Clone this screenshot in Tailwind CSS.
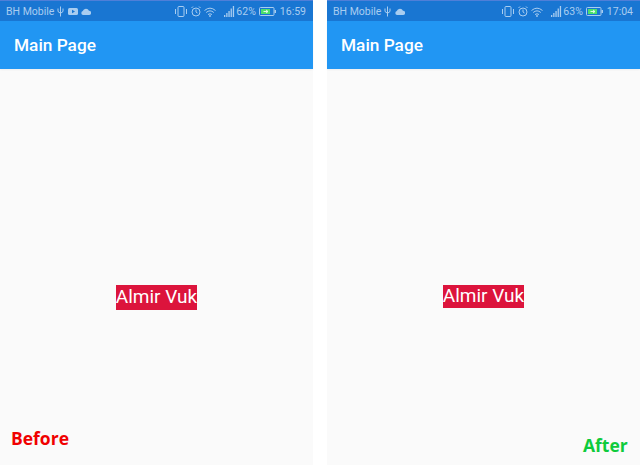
<!DOCTYPE html>
<html>
  <head>
    <meta charset="UTF-8" />
    <title>Main Page</title>
    <script src="https://cdn.jsdelivr.net/npm/@tailwindcss/browser@4"></script>
  </head>
  <body class="bg-white font-['Roboto',sans-serif]">
    <div class="flex h-[465px] w-[640px] justify-between overflow-hidden">
      <!-- before -->
      <div class="relative flex w-[313px] flex-col bg-[#fafafa]">
        <div class="flex h-[21px] items-center justify-between border-t border-[#4f7fd8] bg-[#1976d2] pl-[6px] pr-[7px] pt-[1px] text-[10.5px] text-[#a9cdf0]">
          <div class="flex items-center">
            <span>BH Mobile</span>
            <svg class="ml-[3px] h-[11px] w-[7px]" viewBox="0 0 7 11" fill="none" stroke="currentColor" stroke-width="1"><path d="M3.5 0.5V10.5M1 2.5V5Q1 6.5 3.5 7Q6 6.5 6 5V2.5" /></svg>
            <svg class="ml-[4px] h-[7px] w-[10px]" viewBox="0 0 10 7"><rect width="10" height="7" rx="1.5" fill="currentColor" /><path d="M4 1.75L7 3.5L4 5.25Z" fill="#1976d2" /></svg>
            <svg class="ml-[3px] h-[7px] w-[10px]" viewBox="0 0 10 7" fill="currentColor"><path d="M2 7A2 2 0 0 1 1.8 3.1A3.3 3.3 0 0 1 8 2.8A2.1 2.1 0 0 1 8 7Z" /></svg>
          </div>
          <div class="flex items-center">
            <svg class="h-[11px] w-[12px]" viewBox="0 0 12 11" fill="none" stroke="currentColor"><rect x="3" y="0.5" width="6" height="10" rx="1" /><path d="M0.5 3V8M11.5 3V8" /></svg>
            <svg class="ml-[4px] h-[11px] w-[10px]" viewBox="0 0 10 11" fill="none" stroke="currentColor"><circle cx="5" cy="6" r="4" /><path d="M5 3.5V6L6.5 7M0.5 2L2 0.5M9.5 2L8 0.5" /></svg>
            <svg class="ml-[3px] h-[10px] w-[12px]" viewBox="0 0 12 10" fill="none" stroke="currentColor"><path d="M0.5 3.5Q6 -1.2 11.5 3.5M2.2 5.5Q6 2.2 9.8 5.5M4 7.5Q6 6 8 7.5" /><circle cx="6" cy="9" r="0.6" /></svg>
            <svg class="ml-[8px] h-[11px] w-[11px]" viewBox="0 0 11 11" fill="currentColor"><rect x="0" y="9" width="1.3" height="2" /><rect x="2.2" y="7" width="1.3" height="4" /><rect x="4.4" y="5" width="1.3" height="6" /><rect x="6.6" y="2.5" width="1.3" height="8.5" /><rect x="8.8" y="0" width="1.3" height="11" /></svg>
            <span class="ml-[1px]">62%</span>
            <svg class="ml-[3px] h-[9px] w-[17px]" viewBox="0 0 17 9"><rect x="0.5" y="0.5" width="14.5" height="8" rx="1" fill="none" stroke="#a9cdf0" /><rect x="2" y="2" width="9" height="5" fill="#4be06a" /><rect x="15.5" y="3" width="1.5" height="3" fill="#a9cdf0" /><path d="M4.5 4.5H8.5M7 3L9 4.5L7 6" stroke="#fff" fill="none" stroke-width="0.8" /></svg>
            <span class="ml-[4px]">16:59</span>
          </div>
        </div>
        <div class="flex h-[48px] items-center bg-[#2196f3] pl-[14px] pt-[2px] text-[17.25px] font-medium text-white shadow-xs">Main Page</div>
        <div class="flex flex-1 justify-center pt-[216px]">
          <span class="flex h-[25px] w-[81px] items-center justify-center whitespace-nowrap bg-[#dc143c] text-[19px] text-white">Almir Vuk</span>
        </div>
        <span class="absolute left-[11px] top-[426px] font-['Open_Sans',sans-serif] text-[17.5px] font-bold leading-[24px] text-[#f00000]">Before</span>
      </div>
      <!-- after -->
      <div class="relative flex w-[313px] flex-col bg-[#fafafa]">
        <div class="flex h-[21px] items-center justify-between border-t border-[#4f7fd8] bg-[#1976d2] pl-[6px] pr-[7px] pt-[1px] text-[10.5px] text-[#a9cdf0]">
          <div class="flex items-center">
            <span>BH Mobile</span>
            <svg class="ml-[3px] h-[11px] w-[7px]" viewBox="0 0 7 11" fill="none" stroke="currentColor" stroke-width="1"><path d="M3.5 0.5V10.5M1 2.5V5Q1 6.5 3.5 7Q6 6.5 6 5V2.5" /></svg>
            <svg class="ml-[4px] h-[7px] w-[10px]" viewBox="0 0 10 7" fill="currentColor"><path d="M2 7A2 2 0 0 1 1.8 3.1A3.3 3.3 0 0 1 8 2.8A2.1 2.1 0 0 1 8 7Z" /></svg>
          </div>
          <div class="flex items-center">
            <svg class="h-[11px] w-[12px]" viewBox="0 0 12 11" fill="none" stroke="currentColor"><rect x="3" y="0.5" width="6" height="10" rx="1" /><path d="M0.5 3V8M11.5 3V8" /></svg>
            <svg class="ml-[4px] h-[11px] w-[10px]" viewBox="0 0 10 11" fill="none" stroke="currentColor"><circle cx="5" cy="6" r="4" /><path d="M5 3.5V6L6.5 7M0.5 2L2 0.5M9.5 2L8 0.5" /></svg>
            <svg class="ml-[3px] h-[10px] w-[12px]" viewBox="0 0 12 10" fill="none" stroke="currentColor"><path d="M0.5 3.5Q6 -1.2 11.5 3.5M2.2 5.5Q6 2.2 9.8 5.5M4 7.5Q6 6 8 7.5" /><circle cx="6" cy="9" r="0.6" /></svg>
            <svg class="ml-[8px] h-[11px] w-[11px]" viewBox="0 0 11 11" fill="currentColor"><rect x="0" y="9" width="1.3" height="2" /><rect x="2.2" y="7" width="1.3" height="4" /><rect x="4.4" y="5" width="1.3" height="6" /><rect x="6.6" y="2.5" width="1.3" height="8.5" /><rect x="8.8" y="0" width="1.3" height="11" /></svg>
            <span class="ml-[1px]">63%</span>
            <svg class="ml-[3px] h-[9px] w-[17px]" viewBox="0 0 17 9"><rect x="0.5" y="0.5" width="14.5" height="8" rx="1" fill="none" stroke="#a9cdf0" /><rect x="2" y="2" width="9" height="5" fill="#4be06a" /><rect x="15.5" y="3" width="1.5" height="3" fill="#a9cdf0" /><path d="M4.5 4.5H8.5M7 3L9 4.5L7 6" stroke="#fff" fill="none" stroke-width="0.8" /></svg>
            <span class="ml-[4px]">17:04</span>
          </div>
        </div>
        <div class="flex h-[48px] items-center bg-[#2196f3] pl-[14px] pt-[2px] text-[17.25px] font-medium text-white shadow-xs">Main Page</div>
        <div class="flex flex-1 justify-center pt-[216px]">
          <span class="flex h-[23px] w-[81px] items-center justify-center whitespace-nowrap bg-[#dc143c] text-[19px] text-white">Almir Vuk</span>
        </div>
        <span class="absolute left-[256px] top-[433px] font-['Open_Sans',sans-serif] text-[17.5px] font-bold leading-[24px] text-[#0ecb3c]">After</span>
      </div>
    </div>
  </body>
</html>
